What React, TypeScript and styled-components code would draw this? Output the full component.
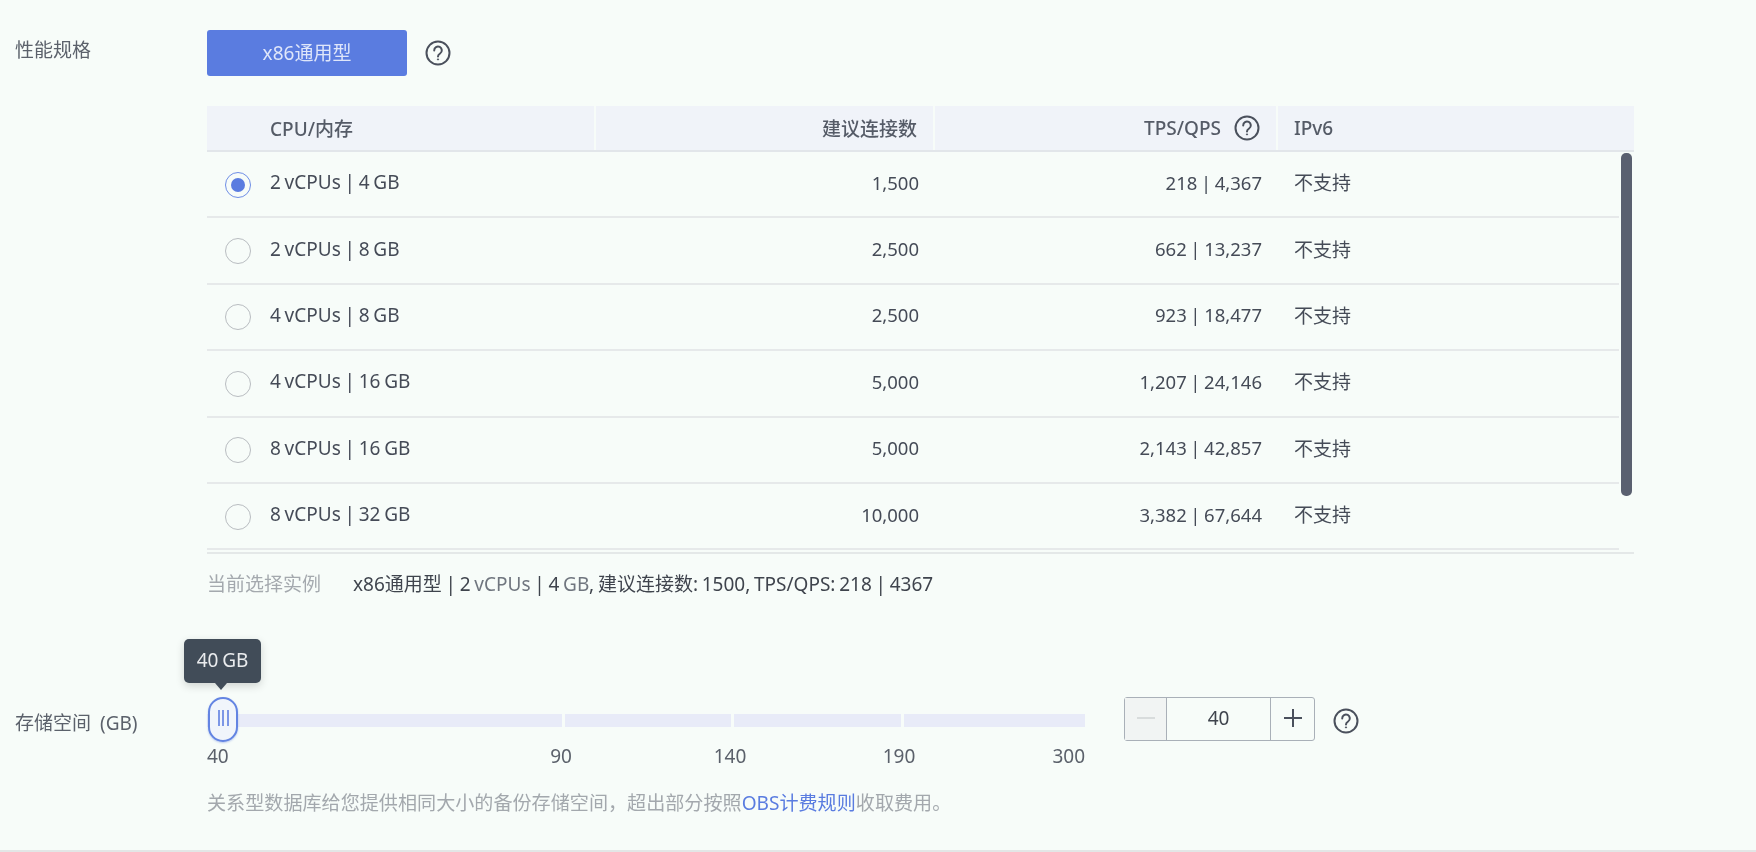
import React from "react";
import styled, { createGlobalStyle } from "styled-components";

const Global = createGlobalStyle`
  html, body { margin: 0; padding: 0; background: #f7fcf9; }
  body { font-family: "Noto Sans", "Noto Sans CJK SC", sans-serif; font-size: 19px; word-spacing: -1.2px; color: #454b57; }
`;

const Page = styled.div`
  width: 1756px;
  height: 852px;
  box-sizing: border-box;
  overflow: hidden;
  background: #f7fcf9;
  padding-top: 30px;
  border-bottom: 2px solid #e3e6e6;
  filter: blur(0.5px);
`;

const FormRow = styled.div`
  display: grid;
  grid-template-columns: 207px 1fr;
`;

const Label = styled.div<{ $top?: number }>`
  padding-left: 15px;
  padding-top: ${(p) => p.$top ?? 0}px;
  line-height: 24px;
  color: #5b616b;
  word-spacing: 4px;
  white-space: nowrap;
`;

const ButtonRow = styled.div`
  display: flex;
  align-items: center;
  gap: 18px;
  height: 46px;
`;

const TypeButton = styled.div`
  width: 200px;
  height: 46px;
  border-radius: 3px;
  background: #5a7ce0;
  color: #dfe6fa;
  display: flex;
  align-items: center;
  justify-content: center;
  padding-bottom: 2px;
  box-sizing: border-box;
`;

const HelpSvg = styled.svg`
  display: block;
  flex: none;
  color: #4a505c;
`;

const Help = () => (
  <HelpSvg width="26" height="26" viewBox="0 0 26 26" fill="none" stroke="currentColor" strokeWidth="2">
    <circle cx="13" cy="13" r="11.5" />
    <path d="M9.2 10.4a3.8 3.8 0 1 1 5.9 3.1c-1.4.9-2.1 1.5-2.1 3" strokeLinecap="round" />
    <circle cx="13" cy="19.4" r="0.6" fill="currentColor" strokeWidth="1" />
  </HelpSvg>
);

const TableWrap = styled.div`
  margin-top: 30px;
  width: 1427px;
  position: relative;
  border-bottom: 2px solid #e4e8e8;
`;

const HeadRow = styled.div`
  display: grid;
  grid-template-columns: 389px 339px 343px 1fr;
  height: 46px;
  background: #f0f3f9;
  border-bottom: 2px solid #e2e6ea;
  box-sizing: border-box;
  font-weight: 500;
  color: #555b67;
`;

const HeadCell = styled.div<{ $right?: boolean }>`
  display: flex;
  align-items: center;
  justify-content: ${(p) => (p.$right ? "flex-end" : "flex-start")};
  gap: 13px;
  padding: 0 16px;
  border-right: 2px solid #f7fcf9;
  box-sizing: border-box;
  &:first-child { padding-left: 63px; }
  &:last-child { border-right: 0; }
`;

const Body = styled.div`
  width: 1412px;
  height: 400px;
  overflow: hidden;
`;

const Row = styled.div`
  display: grid;
  grid-template-columns: 389px 339px 343px 1fr;
  height: 66.4px;
  box-sizing: border-box;
  border-bottom: 2px solid #e6e9ea;
`;

const Cell = styled.div<{ $right?: boolean }>`
  display: flex;
  align-items: center;
  justify-content: ${(p) => (p.$right ? "flex-end" : "flex-start")};
  padding: 0 16px 4px;
  box-sizing: border-box;
  font-size: ${(p) => (p.$right ? "18.5px" : "19px")};
`;

const SpecCell = styled(Cell)`
  padding-left: 18px;
  gap: 19px;
`;

const Radio = styled.span<{ $on?: boolean }>`
  width: 26px;
  height: 26px;
  border-radius: 50%;
  box-sizing: border-box;
  flex: none;
  border: 1.5px solid ${(p) => (p.$on ? "#6f8ee6" : "#b9bdc1")};
  display: flex;
  align-items: center;
  justify-content: center;
  margin-top: 5px;
  &::after {
    content: "";
    width: 14px;
    height: 14px;
    border-radius: 50%;
    background: ${(p) => (p.$on ? "#5a7ce0" : "transparent")};
  }
`;

const ScrollThumb = styled.div`
  position: absolute;
  left: 1414px;
  top: 47px;
  width: 11px;
  height: 343px;
  border-radius: 5px;
  background: #5a6070;
`;

const Summary = styled.div`
  display: flex;
  margin-top: 16px;
  line-height: 28px;
  color: #3f444d;
`;

const SummaryLabel = styled.span`
  width: 146px;
  color: #a4a9ae;
`;

const Muted = styled.span`
  color: #70767f;
`;

const StorageRow = styled(FormRow)`
  margin-top: 100px;
`;

const SliderRow = styled.div`
  display: flex;
  align-items: flex-start;
`;

const SliderBox = styled.div`
  width: 878px;
  position: relative;
`;

const Track = styled.div`
  display: grid;
  grid-template-columns: 355px 166px 167px 1fr;
  gap: 3px;
  margin-top: 16px;
  height: 13px;
`;

const Segment = styled.div`
  background: #e8ebf8;
`;

const Handle = styled.div`
  position: absolute;
  left: 1px;
  top: -1px;
  width: 30px;
  height: 45px;
  box-sizing: border-box;
  border-radius: 15px;
  border: 2px solid #6384e2;
  background: #f1f5fb;
  display: flex;
  align-items: center;
  justify-content: center;
  gap: 2.5px;
  box-shadow: 0 1px 2px rgba(90, 124, 224, 0.4);
`;

const Grip = styled.span`
  width: 2px;
  height: 16px;
  margin-top: -4px;
  background: #7d97e6;
`;

const Tooltip = styled.div`
  position: absolute;
  left: -23px;
  top: -59px;
  width: 77px;
  height: 44px;
  border-radius: 5px;
  background: #414c58;
  color: #e9ebed;
  display: flex;
  align-items: center;
  justify-content: center;
  box-shadow: 0 3px 8px rgba(0, 0, 0, 0.16);
  padding-bottom: 2px;
  box-sizing: border-box;
  &::after {
    content: "";
    position: absolute;
    left: 31px;
    bottom: -7px;
    border-left: 6px solid transparent;
    border-right: 6px solid transparent;
    border-top: 7px solid #414c58;
  }
`;

const Scale = styled.div`
  position: relative;
  height: 30px;
  margin-top: 14px;
  color: #5b616b;
  line-height: 30px;
`;

const Tick = styled.span<{ $pos: number }>`
  position: absolute;
  left: ${(p) => p.$pos}px;
  transform: translateX(-50%);
`;

const FirstTick = styled.span`
  position: absolute;
  left: 0;
`;

const LastTick = styled.span`
  position: absolute;
  right: 0;
`;

const Stepper = styled.div`
  margin-left: 39px;
  margin-top: -1px;
  display: grid;
  grid-template-columns: 42px 1fr 43px;
  width: 191px;
  height: 44px;
  box-sizing: border-box;
  border: 1.5px solid #a9b0b8;
  border-radius: 3px;
`;

const StepCell = styled.div<{ $off?: boolean }>`
  display: flex;
  align-items: center;
  justify-content: center;
  box-sizing: border-box;
  background: ${(p) => (p.$off ? "#f1f4f3" : "transparent")};
  color: #3f444d;
  &:not(:last-child) { border-right: 1.5px solid #a9b0b8; }
`;

const StepValue = styled(StepCell)`
  padding-bottom: 2px;
`;

const StepIcon = styled.svg`
  display: block;
  margin-top: -2px;
`;

const StorageHelp = styled.div`
  margin-left: 18px;
  margin-top: 10px;
`;

const Hint = styled.div`
  margin-top: 18px;
  line-height: 28px;
  color: #a3a8ad;
  font-size: 19.1px;
`;

const HintLink = styled.a`
  color: #5a7ce0;
`;

const rows = [
  ["2 vCPUs | 4 GB", "1,500", "218 | 4,367"],
  ["2 vCPUs | 8 GB", "2,500", "662 | 13,237"],
  ["4 vCPUs | 8 GB", "2,500", "923 | 18,477"],
  ["4 vCPUs | 16 GB", "5,000", "1,207 | 24,146"],
  ["8 vCPUs | 16 GB", "5,000", "2,143 | 42,857"],
  ["8 vCPUs | 32 GB", "10,000", "3,382 | 67,644"],
];

export default function App() {
  return (
    <Page>
      <Global />
      <FormRow>
        <Label $top={8}>性能规格</Label>
        <div>
          <ButtonRow>
            <TypeButton>x86通用型</TypeButton>
            <Help />
          </ButtonRow>
          <TableWrap>
            <HeadRow>
              <HeadCell>CPU/内存</HeadCell>
              <HeadCell $right>建议连接数</HeadCell>
              <HeadCell $right>
                TPS/QPS <Help />
              </HeadCell>
              <HeadCell>IPv6</HeadCell>
            </HeadRow>
            <Body>
              {rows.map((r, i) => (
                <Row key={r[0]}>
                  <SpecCell>
                    <Radio $on={i === 0} />
                    {r[0]}
                  </SpecCell>
                  <Cell $right>{r[1]}</Cell>
                  <Cell $right>{r[2]}</Cell>
                  <Cell>不支持</Cell>
                </Row>
              ))}
            </Body>
            <ScrollThumb />
          </TableWrap>
          <Summary>
            <SummaryLabel>当前选择实例</SummaryLabel>
            <span>
              x86通用型 | 2 <Muted>vCPUs</Muted> | 4 <Muted>GB</Muted>, 建议连接数: 1500, TPS/QPS: 218 | 4367
            </span>
          </Summary>
        </div>
      </FormRow>
      <StorageRow>
        <Label $top={13}>存储空间 (GB)</Label>
        <div>
          <SliderRow>
            <SliderBox>
              <Track>
                <Segment />
                <Segment />
                <Segment />
                <Segment />
              </Track>
              <Handle>
                <Grip />
                <Grip />
                <Grip />
              </Handle>
              <Tooltip>40 GB</Tooltip>
              <Scale>
                <FirstTick>40</FirstTick>
                <Tick $pos={354}>90</Tick>
                <Tick $pos={523}>140</Tick>
                <Tick $pos={692}>190</Tick>
                <LastTick>300</LastTick>
              </Scale>
            </SliderBox>
            <Stepper>
              <StepCell $off>
                <StepIcon width="20" height="20" viewBox="0 0 20 20" stroke="#d8dcdc" strokeWidth="2">
                  <path d="M1 10h18" />
                </StepIcon>
              </StepCell>
              <StepValue>40</StepValue>
              <StepCell>
                <StepIcon width="20" height="20" viewBox="0 0 20 20" stroke="#4a505c" strokeWidth="2">
                  <path d="M1 10h18M10 1v18" />
                </StepIcon>
              </StepCell>
            </Stepper>
            <StorageHelp>
              <Help />
            </StorageHelp>
          </SliderRow>
          <Hint>
            关系型数据库给您提供相同大小的备份存储空间，超出部分按照<HintLink>OBS计费规则</HintLink>收取费用。
          </Hint>
        </div>
      </StorageRow>
    </Page>
  );
}
